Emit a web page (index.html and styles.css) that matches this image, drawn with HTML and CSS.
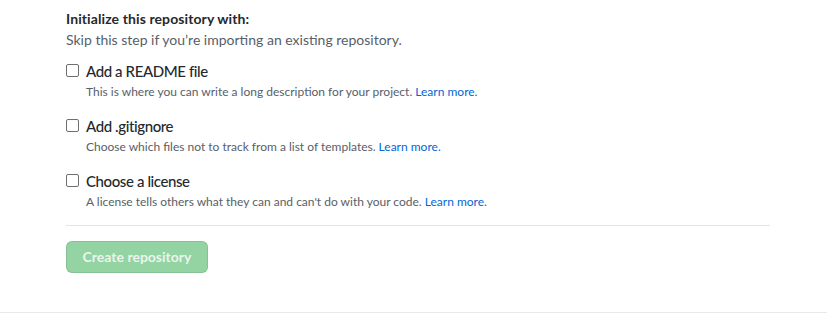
FILE: index.html
```html
<!DOCTYPE html>
<html lang="en">
<head>
<meta charset="utf-8">
<title>Initialize repository</title>
<link rel="stylesheet" href="styles.css">
</head>
<body>
<div class="page">
  <div class="wrap">
    <div class="title">Initialize this repository with:</div>
    <div class="subtitle">Skip this step if you’re importing an existing repository.</div>

    <div class="option">
      <span class="box"></span>
      <label class="label">Add a README file</label>
      <p class="desc">This is where you can write a long description for your project. <a href="#">Learn more.</a></p>
    </div>

    <div class="option">
      <span class="box"></span>
      <label class="label">Add .gitignore</label>
      <p class="desc">Choose which files not to track from a list of templates. <a href="#">Learn more.</a></p>
    </div>

    <div class="option">
      <span class="box"></span>
      <label class="label">Choose a license</label>
      <p class="desc">A license tells others what they can and can't do with your code. <a href="#">Learn more.</a></p>
    </div>

    <hr class="rule">

    <button class="btn" disabled>Create repository</button>
  </div>
</div>
</body>
</html>
```

FILE: styles.css
```css
html, body {
  margin: 0;
  padding: 0;
  background: #fff;
}

body {
  font-family: Lato, "Noto Sans", sans-serif;
  color: #24292e;
}

.page {
  border-bottom: 1px solid #e6e8eb;
  padding-bottom: 39px;
}

.wrap {
  margin: 0 57px 0 66px;
  padding-top: 9px;
}

.title {
  font-size: 14px;
  font-weight: 700;
  letter-spacing: 0.1px;
  line-height: 20px;
}

.subtitle {
  font-size: 14px;
  line-height: 21px;
  color: #586069;
}

.option {
  display: grid;
  grid-template-columns: 20px 1fr;
  margin-top: 10.5px;
}

.option + .option {
  margin-top: 15px;
}

.box {
  grid-column: 1;
  grid-row: 1;
  align-self: center;
  width: 11px;
  height: 11px;
  border: 1px solid #6f6f6f;
  border-radius: 2px;
  background: #fff;
}

.label {
  grid-column: 2;
  grid-row: 1;
  font-size: 15px;
  font-weight: 500;
  letter-spacing: -0.4px;
  line-height: 20px;
  color: #24292e;
}

.desc {
  grid-column: 2;
  grid-row: 2;
  margin: 2px 0 0;
  font-size: 12px;
  line-height: 18px;
  color: #586069;
}

.desc a {
  color: #0366d6;
  text-decoration: none;
}

.rule {
  border: 0;
  border-top: 1px solid #e1e4e8;
  margin: 14px 0 15px;
  height: 0;
}

.btn {
  display: block;
  box-sizing: border-box;
  font-family: inherit;
  font-size: 14px;
  font-weight: 700;
  line-height: 20px;
  padding: 5px 0;
  width: 142px;
  height: 32px;
  white-space: nowrap;
  text-align: center;
  color: rgba(255, 255, 255, 0.82);
  background: #94d3a2;
  border: 1px solid rgba(27, 31, 35, 0.1);
  border-radius: 6px;
  cursor: default;
}
```
